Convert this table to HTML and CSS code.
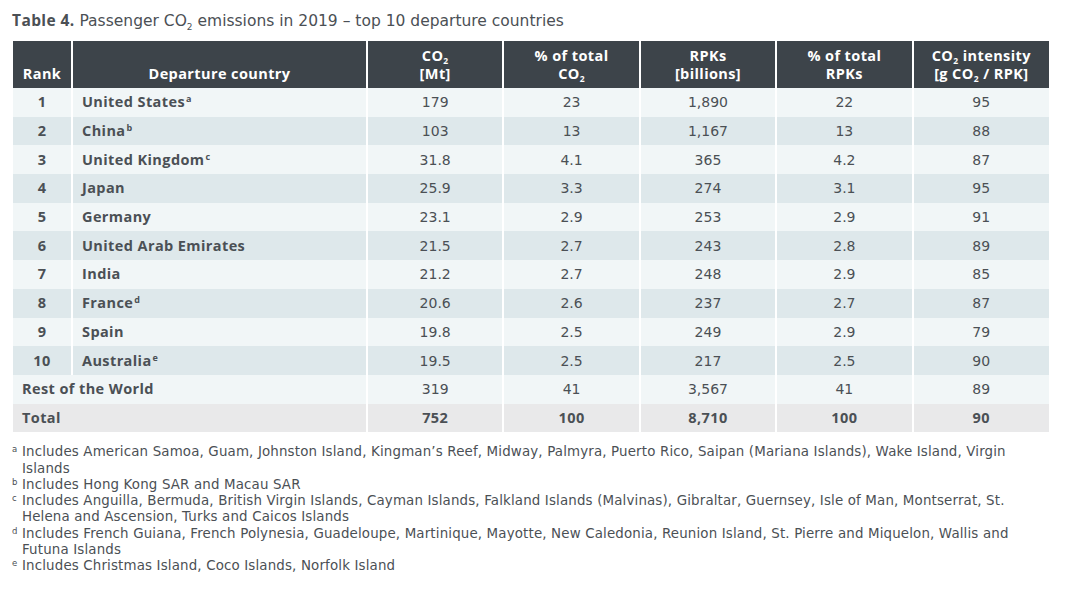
FILE: index.html
```html
<!DOCTYPE html>
<html>
<head>
<meta charset="utf-8">
<link rel="stylesheet" href="styles.css">
</head>
<body>
<div class="page">
  <h1 class="title"><b>Table 4.</b> Passenger CO<sub>2</sub> emissions in 2019 – top 10 departure countries</h1>
  <table class="data">
    <colgroup>
      <col class="c-rank"><col class="c-country"><col class="c-num"><col class="c-num"><col class="c-num"><col class="c-num"><col class="c-num">
    </colgroup>
    <thead>
      <tr>
        <th>Rank</th>
        <th>Departure country</th>
        <th>CO<sub>2</sub><br>[Mt]</th>
        <th>% of total<br>CO<sub>2</sub></th>
        <th>RPKs<br>[billions]</th>
        <th>% of total<br>RPKs</th>
        <th>CO<sub>2</sub> intensity<br>[g CO<sub>2</sub> / RPK]</th>
      </tr>
    </thead>
    <tbody>
      <tr class="odd"><td class="rank">1</td><td class="country">United States<sup>a</sup></td><td>179</td><td>23</td><td>1,890</td><td>22</td><td>95</td></tr>
      <tr class="even"><td class="rank">2</td><td class="country">China<sup>b</sup></td><td>103</td><td>13</td><td>1,167</td><td>13</td><td>88</td></tr>
      <tr class="odd"><td class="rank">3</td><td class="country">United Kingdom<sup>c</sup></td><td>31.8</td><td>4.1</td><td>365</td><td>4.2</td><td>87</td></tr>
      <tr class="even"><td class="rank">4</td><td class="country">Japan</td><td>25.9</td><td>3.3</td><td>274</td><td>3.1</td><td>95</td></tr>
      <tr class="odd"><td class="rank">5</td><td class="country">Germany</td><td>23.1</td><td>2.9</td><td>253</td><td>2.9</td><td>91</td></tr>
      <tr class="even"><td class="rank">6</td><td class="country">United Arab Emirates</td><td>21.5</td><td>2.7</td><td>243</td><td>2.8</td><td>89</td></tr>
      <tr class="odd"><td class="rank">7</td><td class="country">India</td><td>21.2</td><td>2.7</td><td>248</td><td>2.9</td><td>85</td></tr>
      <tr class="even"><td class="rank">8</td><td class="country">France<sup>d</sup></td><td>20.6</td><td>2.6</td><td>237</td><td>2.7</td><td>87</td></tr>
      <tr class="odd"><td class="rank">9</td><td class="country">Spain</td><td>19.8</td><td>2.5</td><td>249</td><td>2.9</td><td>79</td></tr>
      <tr class="even"><td class="rank">10</td><td class="country">Australia<sup>e</sup></td><td>19.5</td><td>2.5</td><td>217</td><td>2.5</td><td>90</td></tr>
      <tr class="odd"><td class="country span" colspan="2">Rest of the World</td><td>319</td><td>41</td><td>3,567</td><td>41</td><td>89</td></tr>
      <tr class="total"><td class="country span" colspan="2">Total</td><td>752</td><td>100</td><td>8,710</td><td>100</td><td>90</td></tr>
    </tbody>
  </table>
  <ul class="notes">
    <li><span class="mark">a</span>Includes American Samoa, Guam, Johnston Island, Kingman’s Reef, Midway, Palmyra, Puerto Rico, Saipan (Mariana Islands), Wake Island, Virgin Islands</li>
    <li><span class="mark">b</span>Includes Hong Kong SAR and Macau SAR</li>
    <li><span class="mark">c</span>Includes Anguilla, Bermuda, British Virgin Islands, Cayman Islands, Falkland Islands (Malvinas), Gibraltar, Guernsey, Isle of Man, Montserrat, St. Helena and Ascension, Turks and Caicos Islands</li>
    <li><span class="mark">d</span>Includes French Guiana, French Polynesia, Guadeloupe, Martinique, Mayotte, New Caledonia, Reunion Island, St. Pierre and Miquelon, Wallis and Futuna Islands</li>
    <li><span class="mark">e</span>Includes Christmas Island, Coco Islands, Norfolk Island</li>
  </ul>
</div>
</body>
</html>
```
FILE: styles.css
```css
html, body {
  margin: 0;
  padding: 0;
  background: #ffffff;
}
body {
  font-family: "DejaVu Sans", "Liberation Sans", sans-serif;
  color: #4b5055;
}
.page {
  padding: 9px 0 0 13px;
  width: 1036px;
}
.title {
  margin: 0 0 0 -1px;
  font-size: 15.5px;
  font-weight: 400;
  line-height: 22px;
  color: #4b5055;
  height: 32px;
}
.title b {
  font-family: "Open Sans", "DejaVu Sans", sans-serif;
  font-weight: 700;
  letter-spacing: 0.4px;
}
.title sub {
  font-size: 9px;
  vertical-align: -4px;
  line-height: 0;
}
.data {
  width: 1036px;
  border-collapse: collapse;
  table-layout: fixed;
  font-size: 14px;
}
.c-rank { width: 59px; }
.c-country { width: 295px; }
.c-num { width: 136.4px; }
.data th {
  font-family: "Open Sans", "DejaVu Sans", sans-serif;
  letter-spacing: 0.4px;
  background: #3d444a;
  color: #ffffff;
  font-weight: 700;
  font-size: 14.5px;
  line-height: 18px;
  height: 47px;
  padding: 0 4px 5px;
  vertical-align: bottom;
  text-align: center;
  border-left: 2px solid #ffffff;
  box-sizing: border-box;
}
.data th:first-child { border-left: none; }
.data sub {
  font-size: 8.5px;
  vertical-align: -3px;
  line-height: 0;
}
.data td {
  height: 28.7px;
  padding: 0 4px;
  text-align: center;
  vertical-align: middle;
  border-left: 2px solid #ffffff;
  box-sizing: border-box;
  line-height: 18px;
}
.data td:first-child { border-left: none; }
.data td.rank,
.data td.country,
.total td {
  font-family: "Open Sans", "DejaVu Sans", sans-serif;
  font-weight: 700;
  font-size: 14.5px;
  letter-spacing: 0.4px;
}
.data td.country {
  text-align: left;
  padding-left: 9px;
}
.data sup {
  font-size: 9px;
  vertical-align: 5px;
  line-height: 0;
  margin-left: 1px;
}
.odd td { background: #f1f6f7; }
.even td { background: #dee8eb; }
.total td { background: #e9e9ea; }
.notes {
  list-style: none;
  margin: 12px 0 0 -13px;
  padding: 0;
  font-size: 13.4px;
  letter-spacing: 0.15px;
  line-height: 16.3px;
  color: #4b5055;
  width: 1025px;
}
.notes li {
  position: relative;
  padding-left: 22px;
}
.notes .mark {
  position: absolute;
  left: 12px;
  top: -3px;
  font-size: 8.5px;
}
```
